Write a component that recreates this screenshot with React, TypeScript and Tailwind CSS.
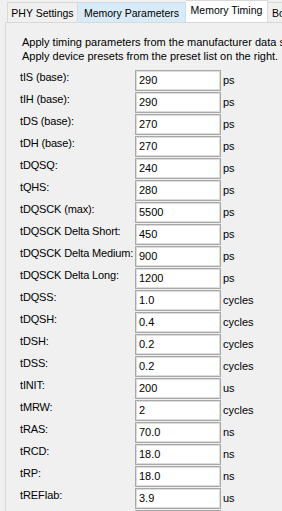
import React from 'react';

type Param = { label: string; value: string; unit: string };

const params: Param[] = [
  { label: 'tIS (base):', value: '290', unit: 'ps' },
  { label: 'tIH (base):', value: '290', unit: 'ps' },
  { label: 'tDS (base):', value: '270', unit: 'ps' },
  { label: 'tDH (base):', value: '270', unit: 'ps' },
  { label: 'tDQSQ:', value: '240', unit: 'ps' },
  { label: 'tQHS:', value: '280', unit: 'ps' },
  { label: 'tDQSCK (max):', value: '5500', unit: 'ps' },
  { label: 'tDQSCK Delta Short:', value: '450', unit: 'ps' },
  { label: 'tDQSCK Delta Medium:', value: '900', unit: 'ps' },
  { label: 'tDQSCK Delta Long:', value: '1200', unit: 'ps' },
  { label: 'tDQSS:', value: '1.0', unit: 'cycles' },
  { label: 'tDQSH:', value: '0.4', unit: 'cycles' },
  { label: 'tDSH:', value: '0.2', unit: 'cycles' },
  { label: 'tDSS:', value: '0.2', unit: 'cycles' },
  { label: 'tINIT:', value: '200', unit: 'us' },
  { label: 'tMRW:', value: '2', unit: 'cycles' },
  { label: 'tRAS:', value: '70.0', unit: 'ns' },
  { label: 'tRCD:', value: '18.0', unit: 'ns' },
  { label: 'tRP:', value: '18.0', unit: 'ns' },
  { label: 'tREFIab:', value: '3.9', unit: 'us' },
  { label: 'tRFCab:', value: '130', unit: 'ns' },
];

const font = "font-['Liberation_Sans',Arial,sans-serif]";

export default function App() {
  return (
    <div className={`w-[282px] h-[511px] overflow-hidden bg-[#f0f0f0] text-black ${font}`}>
      {/* tab strip */}
      <div className="flex items-end h-[22px] pl-[7px] w-[320px]">
        <div className="w-[71px] h-[20px] border border-b-0 border-[#d9d9d9] bg-[#f0f0f0] flex items-center justify-center text-[10.5px] leading-none pt-[1px]">
          PHY Settings
        </div>
        <div className="w-[108px] h-[20px] border border-l-0 border-b-0 border-[#c5dcf0] bg-[#d9ebf9] flex items-center justify-center text-[10.5px] leading-none pt-[1px]">
          Memory Parameters
        </div>
        <div className="w-[82px] h-[22px] border border-b-0 border-l-0 border-[#d9d9d9] bg-white flex items-center justify-center text-[10.5px] leading-none pb-[2px]">
          Memory Timing
        </div>
        <div className="w-[40px] h-[20px] border border-l-0 border-b-0 border-[#d9d9d9] bg-[#f0f0f0] flex items-center pl-[4px] text-[10.5px] leading-none pt-[1px]">
          Border
        </div>
      </div>

      {/* panel */}
      <div className="ml-[5px] w-[320px] h-[520px] border-l border-t border-[#d9d9d9] pl-[14px] pt-[12px]">
        <div className="ml-[2px] text-[11px] leading-[14px] whitespace-nowrap">
          <div>Apply timing parameters from the manufacturer data sheet.</div>
          <div>Apply device presets from the preset list on the right.</div>
        </div>

        <div className="mt-[7px] flex flex-col gap-y-[1px]">
          {params.map((p) => (
            <div key={p.label} className="grid grid-cols-[115px_86px_auto] h-[21px]">
              <div className="text-[11px] leading-[15px] tracking-[-0.15px] whitespace-nowrap">{p.label}</div>
              <div className="h-[21px] border border-[#a8a8a8] shadow-[inset_0_0_0_1px_#dcdcdc] bg-white pl-[3px] flex items-center text-[11px] leading-none">
                {p.value}
              </div>
              <div className="ml-[2px] flex items-center text-[11px] leading-none">{p.unit}</div>
            </div>
          ))}
        </div>
      </div>
    </div>
  );
}
